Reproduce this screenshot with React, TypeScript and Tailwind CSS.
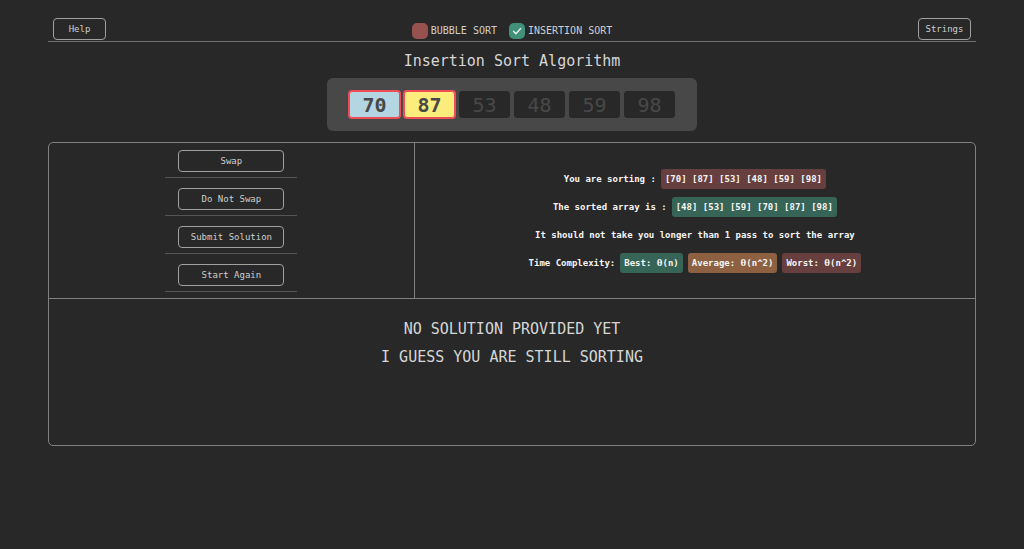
import { useState } from 'react'

type Algorithm = 'bubble' | 'insertion'

const numbers = [70, 87, 53, 48, 59, 98]
const sorted = [48, 53, 59, 70, 87, 98]
const actions = ['Swap', 'Do Not Swap', 'Submit Solution', 'Start Again']

const format = (items: number[]) => items.map((n) => `[${n}]`).join(' ')

function cellStyle(index: number) {
  if (index === 0) return 'bg-[#b4d6e2] text-[#484848] border-[#ee4d55] ring-1 ring-[#ee4d55] font-bold'
  if (index === 1) return 'bg-[#fbec7c] text-[#484848] border-[#ee4d55] ring-1 ring-[#ee4d55] font-bold'
  return 'bg-[#282828] text-[#484848] border-[#282828]'
}

function NavButton({ label }: { label: string }) {
  return (
    <button className="w-[53px] h-[22px] pt-px rounded border border-[#a0a0a0] text-[9px] text-[#cfcfcf]">
      {label}
    </button>
  )
}

interface OptionProps {
  id: string
  label: string
  color: string
  checked: boolean
  onChange: () => void
}

function Option({ id, label, color, checked, onChange }: OptionProps) {
  return (
    <div className="flex items-center gap-[3px]">
      <span className="relative w-4 h-4">
        <input
          id={id}
          type="checkbox"
          checked={checked}
          onChange={onChange}
          className={`block w-4 h-4 appearance-none rounded-[5px] ${color}`}
        />
        {checked && (
          <svg viewBox="0 0 16 16" className="absolute inset-0 pointer-events-none" fill="none" stroke="#f2f2f2" strokeWidth="1.4">
            <path d="M4.2 8 L6.9 10.7 L12 5.1" />
          </svg>
        )}
      </span>
      <label htmlFor={id} className="text-[10px] text-[#cfcfcf]">{label}</label>
    </div>
  )
}

function Chip({ color, children }: { color: string; children: React.ReactNode }) {
  return (
    <span className={`px-1 h-5 leading-5 rounded-[3px] whitespace-pre ${color}`}>{children}</span>
  )
}

function Theta() {
  return <span className="font-['Liberation_Serif',serif] text-[11px] leading-none">θ</span>
}

export default function App() {
  const [algorithm, setAlgorithm] = useState<Algorithm>('insertion')

  return (
    <div className="min-h-screen bg-[#282828] px-12 pt-[18px] pb-8 font-['DejaVu_Sans_Mono',monospace] text-[#d6d6d6]">
      <header className="flex items-center justify-between px-[5px] pb-px border-b border-[#707070]">
        <NavButton label="Help" />
        <div className="flex items-center gap-3 pt-[3px]">
          <Option
            id="bubble"
            label="BUBBLE SORT"
            color="bg-[#975250]"
            checked={algorithm === 'bubble'}
            onChange={() => setAlgorithm('bubble')}
          />
          <Option
            id="insertion"
            label="INSERTION SORT"
            color="bg-[#41917a]"
            checked={algorithm === 'insertion'}
            onChange={() => setAlgorithm('insertion')}
          />
        </div>
        <NavButton label="Strings" />
      </header>

      <main>
        <h1 className="pt-[9px] pb-[7px] text-center text-[15px] leading-5">
          {algorithm === 'insertion' ? 'Insertion' : 'Bubble'} Sort Algorithm
        </h1>

        <div className="flex gap-1 w-fit mx-auto px-[22px] py-[13px] rounded-md bg-[#484848]">
          {numbers.map((n, i) => (
            <div
              key={n}
              className={`flex items-center justify-center w-[51px] h-[27px] rounded-[3px] border text-[20px] leading-6 ${cellStyle(i)}`}
            >
              {n}
            </div>
          ))}
        </div>

        <div className="mt-[11px] rounded-[5px] border border-[#808080]">
          <div className="flex border-b border-[#808080]">
            <div className="flex flex-col items-center gap-[10px] w-[39.5%] pt-[7px] pb-[6px] border-r border-[#808080]">
              {actions.map((action) => (
                <div key={action} className="flex justify-center w-[132px] pb-[5px] border-b border-[#555555]">
                  <button className="w-[106px] h-[22px] pt-px rounded border border-[#a0a0a0] text-[9px] text-[#cfcfcf]">
                    {action}
                  </button>
                </div>
              ))}
            </div>

            <div className="flex-1 flex flex-col items-center justify-center gap-2 text-[9px] leading-5 font-bold text-[#f5f5f5]">
              <p className="flex gap-[5px]">
                You are sorting :
                <Chip color="bg-[#673f3e]">{format(numbers)}</Chip>
              </p>
              <p className="flex gap-[5px]">
                The sorted array is :
                <Chip color="bg-[#366456]">{format(sorted)}</Chip>
              </p>
              <p>It should not take you longer than 1 pass to sort the array</p>
              <p className="flex gap-[5px]">
                Time Complexity:
                <Chip color="bg-[#366456]">Best: <Theta />(n)</Chip>
                <Chip color="bg-[#8c6040]">Average: <Theta />(n^2)</Chip>
                <Chip color="bg-[#673f3e]">Worst: <Theta />(n^2)</Chip>
              </p>
            </div>
          </div>

          <div className="pt-4 pb-[74px] text-center text-[15px] leading-7">
            <p>NO SOLUTION PROVIDED YET</p>
            <p>I GUESS YOU ARE STILL SORTING</p>
          </div>
        </div>
      </main>
    </div>
  )
}
